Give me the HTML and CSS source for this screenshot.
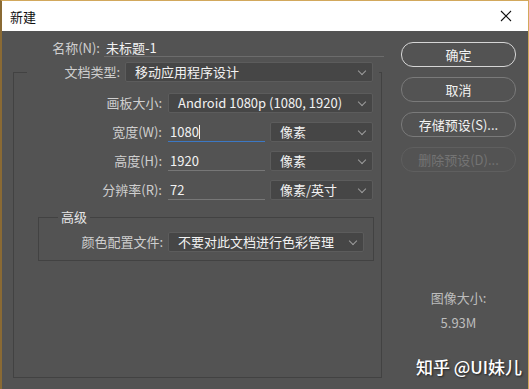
FILE: index.html
```html
<!DOCTYPE html>
<html>

<head>
    <title>新建</title>
    <meta charset="UTF-8">
    <meta name="viewport" content="width=device-width, initial-scale=1.0">
    <link rel="stylesheet" href="styles.css">
</head>

<body>
    <div class="window">
        <div class="titlebar">
            <span class="title">新建</span>
            <svg class="close" width="12" height="12" viewBox="0 0 12 12">
                <path d="M1 1 L11 11 M11 1 L1 11" stroke="#111" stroke-width="1.1" fill="none" />
            </svg>
        </div>

        <div class="content">
            <div class="form">
                <div class="name-row">
                    <label class="name-label">名称(N):</label>
                    <div class="name-input">未标题-1</div>
                </div>

                <fieldset class="main-box">
                    <legend class="type-legend">
                        <label class="type-label">文档类型:</label>
                        <div class="select type-select">移动应用程序设计</div>
                    </legend>

                    <div class="row first">
                        <label class="row-label">画板大小:</label>
                        <div class="select wide">Android 1080p (1080, 1920)</div>
                    </div>

                    <div class="row">
                        <label class="row-label">宽度(W):</label>
                        <div class="num active">1080<span class="caret"></span></div>
                        <div class="select unit">像素</div>
                    </div>

                    <div class="row">
                        <label class="row-label">高度(H):</label>
                        <div class="num">1920</div>
                        <div class="select unit">像素</div>
                    </div>

                    <div class="row">
                        <label class="row-label">分辨率(R):</label>
                        <div class="num">72</div>
                        <div class="select unit">像素/英寸</div>
                    </div>

                    <fieldset class="adv-box">
                        <legend class="adv-legend">高级</legend>
                        <div class="adv-row">
                            <label class="adv-label">颜色配置文件:</label>
                            <div class="select color">不要对此文档进行色彩管理</div>
                        </div>
                    </fieldset>
                </fieldset>
            </div>

            <div class="side">
                <button class="btn primary">确定</button>
                <button class="btn">取消</button>
                <button class="btn">存储预设(S)...</button>
                <button class="btn disabled">删除预设(D)...</button>

                <div class="size-info">
                    <p class="size-label">图像大小:</p>
                    <p class="size-value">5.93M</p>
                </div>
            </div>
        </div>

        <div class="watermark">知乎 @UI妹儿</div>
    </div>
</body>

</html>
```

FILE: styles.css
```css
* {
    box-sizing: border-box;
}

body {
    margin: 0;
    font-family: "Noto Sans CJK SC", "Noto Sans", sans-serif;
    font-size: 13px;
    background-color: #535353;
}

.window {
    position: relative;
    width: 529px;
    height: 389px;
    border-left: 2px solid #8a6a34;
    border-top: 1px solid #d2a85c;
    border-right: 1px solid #d2a85c;
    background-color: #535353;
    overflow: hidden;
}

.titlebar {
    height: 30px;
    background-color: #fff;
    display: flex;
    align-items: center;
    justify-content: space-between;
    padding: 0 16px 0 8px;
}

.title {
    color: #111;
    font-size: 13px;
}

.content {
    display: flex;
    height: 357px;
}

.form {
    width: 399px;
    flex-shrink: 0;
}

label {
    color: #cfcfcf;
    text-align: right;
    line-height: 20px;
    white-space: nowrap;
}

/* name row */
.name-row {
    display: flex;
    align-items: flex-end;
    gap: 4px;
    margin-top: 8px;
    height: 18px;
}

.name-label {
    width: 98px;
    line-height: 18px;
}

.name-input {
    width: 280px;
    height: 18px;
    line-height: 17px;
    color: #f2f2f2;
    border-bottom: 1px solid #6c6c6c;
    padding-left: 2px;
}

/* main box */
.main-box {
    margin: 5px 0 0 11px;
    padding: 0;
    width: 369px;
    height: 316px;
    border: 1px solid #424242;
}

.type-legend {
    display: flex;
    gap: 5px;
    margin-left: 13px;
    padding: 0 6px 0 0;
    background-color: #535353;
}

.type-label {
    width: 93px;
}

.select {
    position: relative;
    height: 20px;
    line-height: 18px;
    background-color: #464646;
    border: 1px solid #5c5c5c;
    border-radius: 2px;
    color: #f2f2f2;
    padding-left: 9px;
    white-space: nowrap;
}

.select::after {
    content: "";
    position: absolute;
    right: 7px;
    top: 5px;
    width: 5px;
    height: 5px;
    border-right: 1px solid #9c9c9c;
    border-bottom: 1px solid #9c9c9c;
    transform: rotate(45deg);
}

.type-select {
    width: 248px;
}

.row {
    display: flex;
    align-items: flex-end;
    margin-top: 8px;
    height: 20px;
}

.row.first {
    margin-top: 11px;
}

.row + .row {
    margin-top: 9px;
}

.row-label {
    width: 148px;
    margin-right: 6px;
}

.wide {
    width: 205px;
}

.num {
    width: 97px;
    height: 20px;
    line-height: 19px;
    color: #f2f2f2;
    border-bottom: 1px solid #777;
    padding-left: 2px;
    margin-right: 5px;
}

.num.active {
    border-bottom-color: #3c78c4;
}

.caret {
    display: inline-block;
    width: 1px;
    height: 14px;
    background-color: #eee;
    vertical-align: -2px;
}

.unit {
    width: 103px;
}

/* advanced box */
.adv-box {
    margin: 9px 0 0 24px;
    padding: 0 0 8px 0;
    width: 336px;
    border: 1px solid #424242;
}

.adv-legend {
    margin-left: 19px;
    padding: 0 3px;
    color: #e6e6e6;
    line-height: 16px;
}

.adv-row {
    display: flex;
    gap: 5px;
    margin-top: 7px;
}

.adv-label {
    width: 124px;
}

.color {
    width: 196px;
}

/* right side */
.side {
    display: flex;
    flex-direction: column;
    gap: 10px;
    padding-top: 11px;
    width: 115px;
}

.btn {
    width: 115px;
    height: 25px;
    border-radius: 12px;
    border: 1px solid #7a7a7a;
    background-color: #535353;
    color: #f2f2f2;
    font-family: inherit;
    font-size: 13px;
    padding: 0;
}

.btn.primary {
    border: 1.5px solid #d6d6d6;
}

.btn.disabled {
    border-color: #5f5f5f;
    color: #747474;
}

.size-info {
    margin-top: 106px;
    text-align: center;
    color: #bdbdbd;
}

.size-info p {
    margin: 0;
}

.size-label {
    line-height: 20px;
}

.size-value {
    margin-top: 5px !important;
    line-height: 20px;
}

.watermark {
    position: absolute;
    left: 414px;
    top: 353px;
    color: #fff;
    font-size: 17px;
    font-weight: 500;
    text-shadow: 1px 1px 2px #222;
    white-space: nowrap;
}
```
